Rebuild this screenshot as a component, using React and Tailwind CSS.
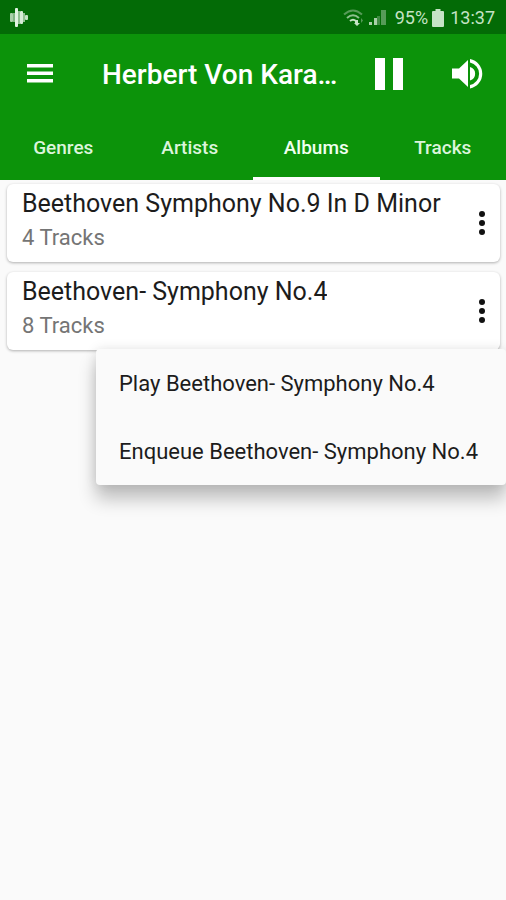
import { useState } from "react";

const tabs = ["Genres", "Artists", "Albums", "Tracks"];

const albums = [
  { name: "Beethoven Symphony No.9 In D Minor", tracks: 4 },
  { name: "Beethoven- Symphony No.4", tracks: 8 },
];

function StatusBar() {
  return (
    <div className="flex h-[34px] items-center justify-between bg-[#036b06] pt-[2px] pr-[11px] pl-2 text-[#c5e3c5]">
      <svg width="22" height="22" viewBox="0 0 22 22" aria-hidden="true">
        <rect x="2" y="6" width="3" height="9" rx="1" fill="#a9d0a9" />
        <rect x="5" y="6" width="2" height="9" fill="#7fb581" />
        <rect x="7" y="1" width="3" height="19" rx="1" fill="#e2f3e2" />
        <rect x="10" y="4" width="2" height="13" fill="#8fc090" />
        <rect x="12" y="4" width="3" height="13" rx="1" fill="#d6ecd6" />
        <rect x="15" y="6" width="2" height="9" fill="#8fc090" />
        <rect x="17" y="8" width="3" height="5" rx="1" fill="#c5e3c5" />
      </svg>
      <div className="flex items-center gap-1">
        <svg width="22" height="20" viewBox="0 0 22 20" fill="none" aria-hidden="true">
          <path d="M1 6.500Q10 -1.500 19 6.500" stroke="#569b58" strokeWidth="2" />
          <path d="M4 10Q10 4.500 16 10" stroke="#8dbf8e" strokeWidth="2" />
          <path d="M7 13Q10 10.500 13 13" stroke="#c5e3c5" strokeWidth="2" />
          <path d="M12 12h3v3h2l-3 3-3-3h1z" fill="#c5e3c5" />
          <path d="M18 10v5l2-2.500z" fill="#569b58" />
        </svg>
        <svg width="18" height="18" viewBox="0 0 18 18" aria-hidden="true">
          <rect x="0" y="13" width="3" height="3" fill="#a9d0a9" />
          <rect x="5" y="9" width="3" height="7" fill="#a9d0a9" />
          <rect x="8" y="7" width="3" height="9" fill="#3f8c42" />
          <rect x="12" y="1" width="5" height="15" fill="#569b58" />
        </svg>
        <span className="ml-1 text-lg">95%</span>
        <svg className="mr-[2px]" width="12" height="18" viewBox="0 0 12 18" fill="#c5e3c5" aria-hidden="true">
          <path d="M3.500 0h5v2H11a1 1 0 0 1 1 1v14a1 1 0 0 1-1 1H1a1 1 0 0 1-1-1V3a1 1 0 0 1 1-1h2.500z" />
        </svg>
        <span className="text-lg">13:37</span>
      </div>
    </div>
  );
}

function Toolbar() {
  return (
    <div className="flex h-[79px] items-center pr-5 pl-6">
      <button aria-label="Open menu" className="p-[2px]">
        <svg width="28" height="28" viewBox="0 0 28 28" fill="white">
          <path d="M1 4h26v3.500H1zM1 11.500h26V15H1zM1 19h26v3.500H1z" />
        </svg>
      </button>
      <h1 className="ml-[46px] min-w-0 flex-1 truncate pt-[2px] text-[28px] font-medium">
        Herbert Von Karajan
      </h1>
      <button aria-label="Pause" className="ml-8 p-1">
        <svg width="28" height="32" viewBox="0 0 28 32" fill="white">
          <path d="M0 0h10v32H0zM18 0h10v32H18z" />
        </svg>
      </button>
      <button aria-label="Volume" className="ml-[45px]">
        <svg width="34" height="32" viewBox="0 0 34 32" fill="white">
          <path d="M0 10.500v10h7L16 29V2L7 10.500zM18 9v13.500a7 7 0 0 0 0-13.500zM18 1v3.500a11.500 11.500 0 0 1 0 22.500v3.500a15 15 0 0 0 0-29.500z" />
        </svg>
      </button>
    </div>
  );
}

function AlbumCard({ album, onMenu }) {
  return (
    <li className="flex h-[78px] items-start justify-between rounded-md bg-white pl-[15px] shadow-[0_1px_3px_rgba(0,0,0,0.3)]">
      <div className="min-w-0">
        <h2 className="truncate text-[25px] leading-[40px] text-[#1c1c1c]">{album.name}</h2>
        <p className="text-[22px] leading-[28px] text-[#757575]">{album.tracks} Tracks</p>
      </div>
      <button
        aria-label={"Options for " + album.name}
        onClick={onMenu}
        className="flex h-full w-9 shrink-0 items-center justify-center"
      >
        <svg width="8" height="26" viewBox="0 0 8 26" fill="#111">
          <circle cx="4" cy="4" r="3" />
          <circle cx="4" cy="13" r="3" />
          <circle cx="4" cy="22" r="3" />
        </svg>
      </button>
    </li>
  );
}

export default function App() {
  const [tab, setTab] = useState("Albums");
  const [open, setOpen] = useState(1);

  return (
    <div className="min-h-screen overflow-x-hidden bg-[#fafafa] font-[Roboto,sans-serif]">
      <StatusBar />
      <header className="bg-[#0c930a] text-white">
        <Toolbar />
        <nav className="grid grid-cols-4">
          {tabs.map((name) => (
            <button
              key={name}
              onClick={() => setTab(name)}
              className={
                "h-[67px] border-b-[3px] pt-[6px] text-[19px] font-medium " +
                (tab === name ? "border-white text-[#f0fff0]" : "border-transparent text-[#dcf5dc]")
              }
            >
              {name}
            </button>
          ))}
        </nav>
      </header>

      <main className="pt-1 pr-[6px] pl-[7px]">
        <ul className="flex flex-col gap-[10px]">
          {albums.map((album, i) => (
            <AlbumCard key={album.name} album={album} onMenu={() => setOpen(open === i ? null : i)} />
          ))}
        </ul>
        {/* popup is anchored under the last card */}
        {open !== null && (
          <div className="relative">
            <div className="absolute -top-px -right-[6px] flex flex-col rounded-sm bg-[#fafafa] text-[22px] text-[#1c1c1c] shadow-[0_14px_18px_rgba(0,0,0,0.24),0_0_12px_rgba(0,0,0,0.1)]">
              <button className="h-[68px] pr-7 pl-[23px] text-left whitespace-nowrap">
                Play {albums[open].name}
              </button>
              <button className="h-[68px] pr-7 pl-[23px] text-left whitespace-nowrap">
                Enqueue {albums[open].name}
              </button>
            </div>
          </div>
        )}
      </main>
    </div>
  );
}
